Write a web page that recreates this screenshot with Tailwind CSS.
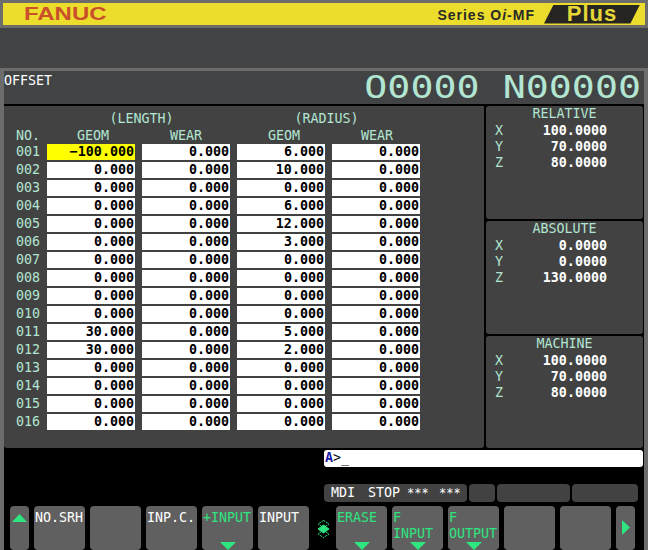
<!DOCTYPE html>
<html lang="en">
<head>
<meta charset="UTF-8" />
<title>Offset</title>
<script src="https://cdn.jsdelivr.net/npm/@tailwindcss/browser@4"></script>
</head>
<body class="w-[648px] h-[550px] overflow-hidden bg-[#424345] font-['DejaVu_Sans_Mono',monospace] text-[13.33px] leading-4">
  <!-- top badge -->
  <header class="h-[28px] border-[3px] border-[#6c6c6c] bg-[#ecdc2c] flex items-center pl-[21px] pr-[5px]">
    <span class="font-['Liberation_Sans',sans-serif] font-bold text-[18px] text-[#c9502a] origin-left scale-x-[1.33]">FANUC</span>
    <span class="ml-auto font-['Liberation_Sans',sans-serif] font-bold text-[14px] text-[#2a2a28] tracking-[1px] mt-[2px]">Series O<i>i</i>-MF</span>
    <span class="ml-[9px] w-[96px] h-[19px] bg-[#262522] [clip-path:polygon(10%_0,100%_0,90%_100%,0_100%)] flex justify-center items-center font-['Liberation_Sans',sans-serif] font-bold text-[22px] text-[#e6d838] tracking-[1px]">Plus</span>
  </header>

  <div class="h-[40px]"></div>

  <!-- main screen -->
  <main class="h-[482px] border-x-[4px] border-t-[3px] border-[#6c6c6c] flex flex-col">
    <div class="h-[35px] flex justify-between shrink-0 border-b-2 border-black">
      <span class="text-white mt-[2px]">OFFSET</span>
      <span class="text-[#b2e6d2] text-[38.3px] leading-[34px] origin-top-right scale-y-[0.84] mt-[2px] mr-[3px] whitespace-pre">O0000 N00000</span>
    </div>

    <div class="h-[342px] flex gap-[2px] shrink-0 bg-black">
      <section class="w-[480px] bg-[#424242] rounded-b-[3px] text-[#b2e6d2]">
        <div class="flex h-[20px] pt-[5px] text-center">
          <span class="ml-[46px] w-[183px]">(LENGTH)</span>
          <span class="ml-[2px] w-[183px]">(RADIUS)</span>
        </div>
        <div class="flex h-[18px] pt-[2px] pl-[12px] text-center">
          <span class="w-[33px] text-left">NO.</span>
          <span class="w-[88px]">GEOM</span>
          <span class="ml-[5px] w-[88px]">WEAR</span>
          <span class="ml-[10px] w-[88px]">GEOM</span>
          <span class="ml-[5px] w-[88px]">WEAR</span>
        </div>
        <div id="rows" class="flex flex-col gap-[2px]"></div>
      </section>

      <aside class="w-[157px] flex flex-col gap-[2px]">
        <div class="pos h-[113px]" data-title="RELATIVE" data-x="100.0000" data-y="70.0000" data-z="80.0000"></div>
        <div class="pos h-[113px]" data-title="ABSOLUTE" data-x="0.0000" data-y="0.0000" data-z="130.0000"></div>
        <div class="pos h-[112px]" data-title="MACHINE" data-x="100.0000" data-y="70.0000" data-z="80.0000"></div>
      </aside>
    </div>

    <!-- black lower area -->
    <div class="flex-1 bg-black flex flex-col">
      <div class="ml-[320px] mt-[2px] h-[17px] w-[319px] bg-white rounded-[3px] pl-[1px] text-black">
        <span class="text-[#1a1aa8] font-bold">A</span>&gt;_
      </div>
      <div class="ml-[320px] mt-[17px] h-[18px] flex gap-[2px] text-white">
        <div class="w-[143px] bg-[#424242] rounded-[4px] pl-[7px] flex items-center">
          <span class="w-[37px]">MDI</span><span class="w-[39px]">STOP</span><span class="w-[32px] text-[12px]">***</span><span class="text-[12px]">***</span>
        </div>
        <div class="w-[26px] bg-[#424242] rounded-[4px]"></div>
        <div class="w-[73px] bg-[#424242] rounded-[4px]"></div>
        <div class="w-[66px] bg-[#424242] rounded-[4px]"></div>
      </div>
      <nav id="keys" class="mt-[4px] h-[44px] flex"></nav>
    </div>
  </main>

  <script>
    const rows = [
      ["−100.000", "0.000", "6.000", "0.000"],
      ["0.000", "0.000", "10.000", "0.000"],
      ["0.000", "0.000", "0.000", "0.000"],
      ["0.000", "0.000", "6.000", "0.000"],
      ["0.000", "0.000", "12.000", "0.000"],
      ["0.000", "0.000", "3.000", "0.000"],
      ["0.000", "0.000", "0.000", "0.000"],
      ["0.000", "0.000", "0.000", "0.000"],
      ["0.000", "0.000", "0.000", "0.000"],
      ["0.000", "0.000", "0.000", "0.000"],
      ["30.000", "0.000", "5.000", "0.000"],
      ["30.000", "0.000", "2.000", "0.000"],
      ["0.000", "0.000", "0.000", "0.000"],
      ["0.000", "0.000", "0.000", "0.000"],
      ["0.000", "0.000", "0.000", "0.000"],
      ["0.000", "0.000", "0.000", "0.000"],
    ];
    document.getElementById("rows").innerHTML = rows.map((row, i) => {
      const cells = row.map((v, j) => {
        const bg = i === 0 && j === 0 ? "bg-[#ffff00]" : "bg-white";
        return `<span class="${bg} w-[88px] h-[16px] pr-[1px] text-right text-black font-semibold">${v}</span>`;
      }).join("");
      const no = String(i + 1).padStart(3, "0");
      return `<div class="flex gap-[7px] pl-[12px]"><span class="w-[24px]">${no}</span>${cells}</div>`;
    }).join("");

    document.querySelectorAll(".pos").forEach((el) => {
      el.classList.add("bg-[#424242]", "rounded-[3px]", "text-[#b2e6d2]");
      const line = (axis, v) => `<div class="flex"><span class="ml-[9px] w-[112px]">${axis}</span><span class="text-white font-semibold w-0 flex justify-end">${v}</span></div>`;
      el.innerHTML = `<div class="text-center mb-[1px]">${el.dataset.title}</div>`
        + line("X", el.dataset.x) + line("Y", el.dataset.y) + line("Z", el.dataset.z);
    });

    const green = "text-[#2ee57f]";
    const keys = [
      { w: 19, ml: 6, up: true },
      { w: 51, ml: 5, t: ["NO.SRH"] },
      { w: 51, ml: 5, t: [""] },
      { w: 51, ml: 5, t: ["INP.C."] },
      { w: 51, ml: 5, t: ["+INPUT"], g: true, down: true },
      { w: 51, ml: 5, t: ["INPUT"] },
      { stack: true },
      { w: 51, ml: 0, t: ["ERASE"], g: true, down: true },
      { w: 51, ml: 5, t: ["F", "INPUT"], g: true, down: true },
      { w: 51, ml: 5, t: ["F", "OUTPUT"], g: true, down: true },
      { w: 51, ml: 5, t: [""] },
      { w: 51, ml: 5, t: [""] },
      { w: 19, ml: 5, right: true },
    ];
    document.getElementById("keys").innerHTML = keys.map((k) => {
      if (k.stack) {
        return `<svg class="ml-[8px] mr-[6px] self-center mt-[2px]" width="13" height="18" viewBox="0 0 13 18" fill="none" stroke="#2ee57f"><path d="M6.5 .5 L12 4 L6.5 7.5 L1 4 Z" stroke-dasharray="2 1"/><path d="M6.5 5 L12 9 L6.5 13 L1 9 Z" fill="#2ee57f"/><path d="M6.5 10.5 L12 14 L6.5 17.5 L1 14 Z" stroke-dasharray="2 1"/></svg>`;
      }
      let inner = "";
      if (k.t) inner += k.t.map((s) => `<div class="h-[16px] whitespace-pre">${s}</div>`).join("");
      if (k.down) inner += `<svg class="absolute left-[18px] bottom-0" width="16" height="8" viewBox="0 0 16 8"><path d="M0 0H16L8 8Z" fill="#2ee57f"/></svg>`;
      if (k.up) inner += `<svg class="absolute left-[2px] top-[8px]" width="15" height="8" viewBox="0 0 15 8"><path d="M7.5 0L15 8H0Z" fill="#2ee57f"/></svg>`;
      if (k.right) inner += `<svg class="absolute left-[6px] top-[14px]" width="8" height="15" viewBox="0 0 8 15"><path d="M0 0L8 7.5L0 15Z" fill="#2ee57f"/></svg>`;
      const color = k.g ? green : "text-white";
      return `<div class="relative bg-[#606060] rounded-[4px] pl-[1px] pt-[4px] ${color}" style="width:${k.w}px;margin-left:${k.ml}px">${inner}</div>`;
    }).join("");
  </script>
</body>
</html>
